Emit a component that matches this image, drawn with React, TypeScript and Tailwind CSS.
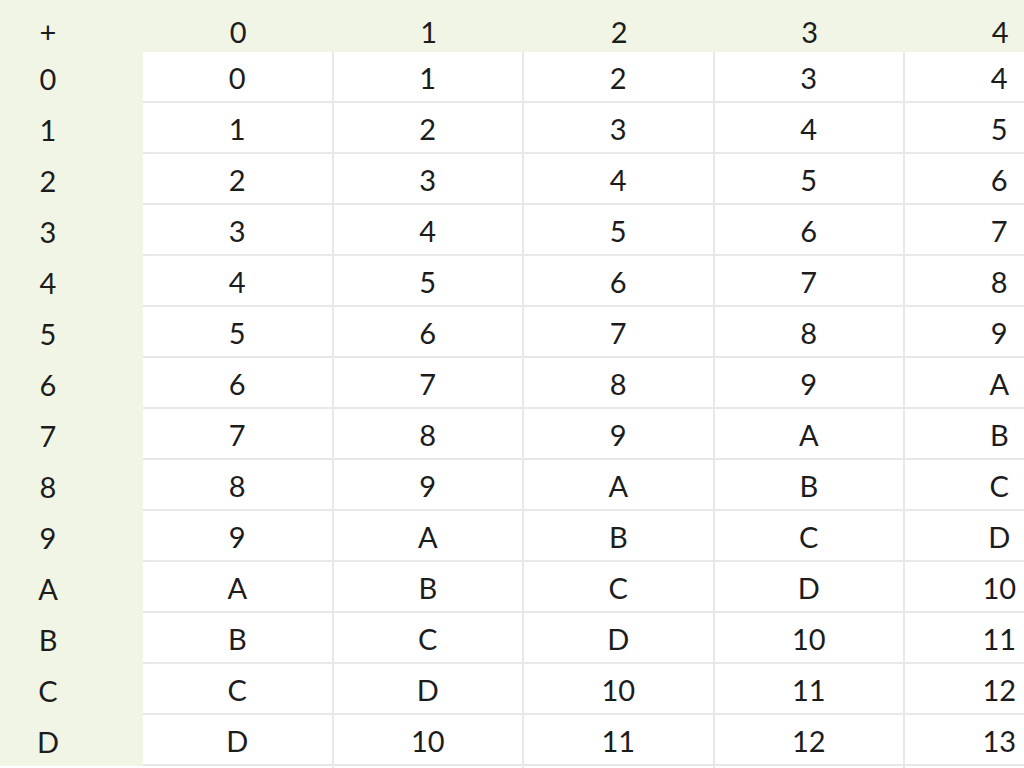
// Addition table in base 14 (digits 0-9, A-D)
const DIGITS = '0123456789ABCD'

function toBase14(n: number): string {
  if (n === 0) return '0'
  let out = ''
  while (n > 0) {
    out = DIGITS[n % 14] + out
    n = Math.floor(n / 14)
  }
  return out
}

const COLS = [0, 1, 2, 3, 4]
const ROWS = [0, 1, 2, 3, 4, 5, 6, 7, 8, 9, 10, 11, 12, 13]

export default function App() {
  return (
    <div
      className="w-[1024px] h-[768px] overflow-hidden bg-white text-[#1c1c1c] text-[29px] leading-none"
      style={{ fontFamily: 'Lato, "Open Sans", sans-serif' }}
    >
      <div className="ml-[-47px] w-[1200px]">
        {/* Header row */}
        <div className="flex h-[52px] bg-[#f1f5e5]">
          <div className="w-[190px] flex items-center justify-center pt-[10px]">+</div>
          {COLS.map(c => (
            <div key={c} className="w-[190.5px] flex items-center justify-center pt-[10px]">
              {DIGITS[c]}
            </div>
          ))}
        </div>

        {/* Body rows */}
        {ROWS.map(r => (
          <div key={r} className="flex h-[51px]">
            <div className="w-[190px] bg-[#f1f5e5] flex items-center justify-center pt-[1px]">
              {DIGITS[r]}
            </div>
            {COLS.map(c => (
              <div
                key={c}
                className="w-[190.5px] border-r-2 border-b-2 border-[#e6e9ec] flex items-center justify-center pt-[1px]"
              >
                {toBase14(r + c)}
              </div>
            ))}
          </div>
        ))}

        {/* Empty row below the table edge */}
        <div className="flex h-[51px]">
          <div className="w-[190px]" />
          {COLS.map(c => (
            <div key={c} className="w-[190.5px] border-r-2 border-b-2 border-[#e6e9ec]" />
          ))}
        </div>
      </div>
    </div>
  )
}
